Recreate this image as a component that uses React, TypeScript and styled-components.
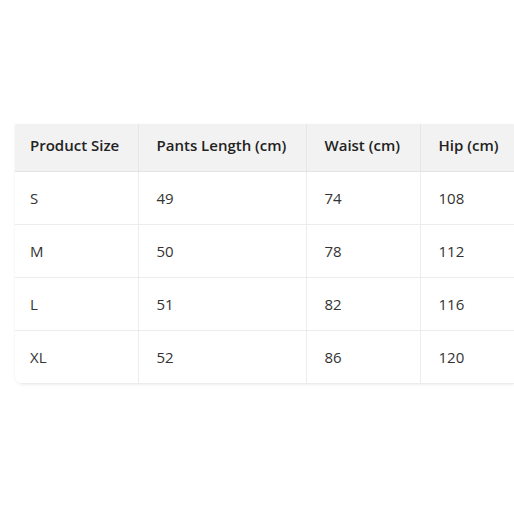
import React from "react";
import styled, { createGlobalStyle } from "styled-components";

const Global = createGlobalStyle`
  html, body { margin: 0; padding: 0; background: #fff; }
  body { font-family: "Open Sans", "Noto Sans", sans-serif; overflow: hidden; }
`;

const Page = styled.div`
  width: 514px;
  height: 514px;
  padding: 124px 0 0 15px;
  box-sizing: border-box;
`;

const Card = styled.div`
  width: 499px;
  border-radius: 0 0 0 8px;
  overflow: hidden;
  box-shadow: 0 1px 3px rgba(0, 0, 0, 0.07);
`;

const Table = styled.table`
  width: 100%;
  border-collapse: collapse;
  table-layout: fixed;
  color: #333;
`;

const Th = styled.th`
  background: #f2f2f2;
  height: 42px;
  padding: 0 10px 5px 18px;
  text-align: left;
  font-size: 15px;
  font-weight: 600;
  color: #222;
  border-bottom: 1px solid #e3e3e3;
  border-left: 1px solid #e6e6e6;
  white-space: nowrap;
  &:first-child { border-left: none; padding-left: 15px; }
`;

const Td = styled.td`
  height: 51px;
  padding: 0 10px 1px 18px;
  font-size: 15px;
  color: #333;
  border-bottom: 1px solid #ececec;
  border-left: 1px solid #ececec;
  &:first-child { border-left: none; padding-left: 15px; }
`;

const widths = [123, 168, 114, 94];
const head = ["Product Size", "Pants Length (cm)", "Waist (cm)", "Hip (cm)"];
const rows = [
  ["S", "49", "74", "108"],
  ["M", "50", "78", "112"],
  ["L", "51", "82", "116"],
  ["XL", "52", "86", "120"],
];

export default function App() {
  return (
    <>
      <Global />
      <Page>
        <Card>
          <Table>
            <colgroup>
              {widths.map((w, i) => (
                <col key={i} style={{ width: w }} />
              ))}
            </colgroup>
            <thead>
              <tr>
                {head.map((h) => (
                  <Th key={h}>{h}</Th>
                ))}
              </tr>
            </thead>
            <tbody>
              {rows.map((r) => (
                <tr key={r[0]}>
                  {r.map((c, i) => (
                    <Td key={i}>{c}</Td>
                  ))}
                </tr>
              ))}
            </tbody>
          </Table>
        </Card>
      </Page>
    </>
  );
}
